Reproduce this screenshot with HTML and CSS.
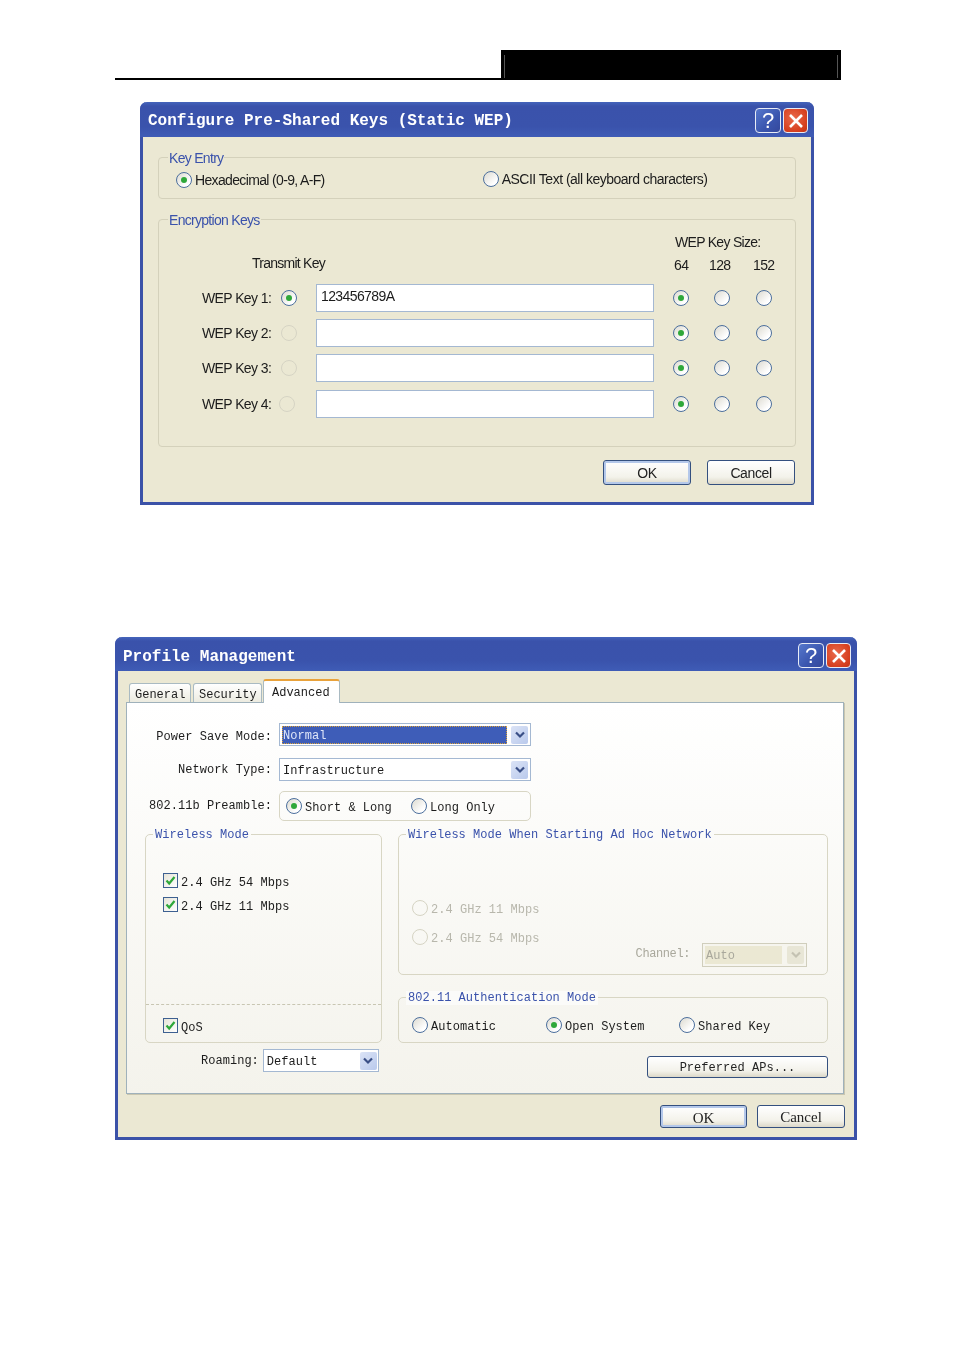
FILE: index.html
```html
<!DOCTYPE html>
<html lang="en">
<head>
<meta charset="utf-8">
<title>Wireless dialogs</title>
<link rel="stylesheet" href="styles.css">
</head>
<body>
<header class="page-head">
  <div class="head-rule"></div>
  <div class="head-box"><i class="head-tick"></i><i class="head-tick"></i></div>
</header>

<section class="dialog dialog-wep">
  <div class="titlebar">
    <span class="title">Configure Pre-Shared Keys (Static WEP)</span>
    <div class="title-btns">
      <span class="tb tb-help">?</span>
      <span class="tb tb-close"><svg viewBox="0 0 16 16" width="16" height="16"><path d="M2 2 14 14M14 2 2 14" stroke="#fff" stroke-width="2.6" fill="none"/></svg></span>
    </div>
  </div>
  <div class="wep-body">
    <div class="group key-entry">
      <span class="legend">Key Entry</span>
      <label class="opt hex"><span class="radio on"></span>Hexadecimal (0-9, A-F)</label>
      <label class="opt ascii"><span class="radio"></span>ASCII Text (all keyboard characters)</label>
    </div>
    <div class="group enc-keys">
      <span class="legend">Encryption Keys</span>
      <div class="size-title">WEP Key Size:</div>
      <div class="size-head">
        <span class="tx-title">Transmit Key</span>
        <span class="size-nums"><span>64</span><span>128</span><span>152</span></span>
      </div>
      <div class="key-row">
        <span class="key-label">WEP Key 1:</span>
        <span class="radio on tx"></span>
        <div class="key-input">123456789A</div>
        <div class="sizes"><span class="radio on"></span><span class="radio"></span><span class="radio"></span></div>
      </div>
      <div class="key-row">
        <span class="key-label">WEP Key 2:</span>
        <span class="radio off tx"></span>
        <div class="key-input"></div>
        <div class="sizes"><span class="radio on"></span><span class="radio"></span><span class="radio"></span></div>
      </div>
      <div class="key-row">
        <span class="key-label">WEP Key 3:</span>
        <span class="radio off tx"></span>
        <div class="key-input"></div>
        <div class="sizes"><span class="radio on"></span><span class="radio"></span><span class="radio"></span></div>
      </div>
      <div class="key-row last">
        <span class="key-label">WEP Key 4:</span>
        <span class="radio off tx"></span>
        <div class="key-input"></div>
        <div class="sizes"><span class="radio on"></span><span class="radio"></span><span class="radio"></span></div>
      </div>
    </div>
    <div class="actions wep-actions">
      <button class="btn default">OK</button>
      <button class="btn">Cancel</button>
    </div>
  </div>
</section>

<section class="dialog dialog-profile">
  <div class="titlebar">
    <span class="title">Profile Management</span>
    <div class="title-btns">
      <span class="tb tb-help">?</span>
      <span class="tb tb-close"><svg viewBox="0 0 16 16" width="16" height="16"><path d="M2 2 14 14M14 2 2 14" stroke="#fff" stroke-width="2.6" fill="none"/></svg></span>
    </div>
  </div>
  <div class="profile-body">
    <div class="tabs">
      <span class="tab t-general">General</span>
      <span class="tab t-security">Security</span>
      <span class="tab active">Advanced</span>
    </div>
    <div class="panel">
      <div class="form-row row-power">
        <span class="form-label">Power Save Mode:</span>
        <div class="select wide selected"><span class="select-val"><span class="sel-text">Normal</span></span><span class="arrow"><svg viewBox="0 0 12 12" width="12" height="12"><path d="M2 3.5 6 7.5 10 3.5" stroke="#3a4f86" stroke-width="2.2" fill="none"/></svg></span></div>
      </div>
      <div class="form-row">
        <span class="form-label">Network Type:</span>
        <div class="select wide"><span class="select-val">Infrastructure</span><span class="arrow"><svg viewBox="0 0 12 12" width="12" height="12"><path d="M2 3.5 6 7.5 10 3.5" stroke="#3a4f86" stroke-width="2.2" fill="none"/></svg></span></div>
      </div>
      <div class="form-row preamble-row">
        <span class="form-label">802.11b Preamble:</span>
        <div class="preamble">
          <label class="opt2 w125"><span class="radio on"></span>Short &amp; Long</label>
          <label class="opt2"><span class="radio"></span>Long Only</label>
        </div>
      </div>
      <div class="columns">
        <div class="col">
          <div class="group2 wireless">
            <span class="legend2">Wireless Mode</span>
            <div class="checks">
              <label class="opt2"><span class="check"><svg viewBox="0 0 13 13" width="13" height="13"><path d="M2.5 6.5 5.2 9.5 10.5 3" stroke="#2fa83a" stroke-width="2.2" fill="none"/></svg></span>2.4 GHz 54 Mbps</label>
              <label class="opt2"><span class="check"><svg viewBox="0 0 13 13" width="13" height="13"><path d="M2.5 6.5 5.2 9.5 10.5 3" stroke="#2fa83a" stroke-width="2.2" fill="none"/></svg></span>2.4 GHz 11 Mbps</label>
            </div>
            <div class="qos">
              <label class="opt2"><span class="check"><svg viewBox="0 0 13 13" width="13" height="13"><path d="M2.5 6.5 5.2 9.5 10.5 3" stroke="#2fa83a" stroke-width="2.2" fill="none"/></svg></span>QoS</label>
            </div>
          </div>
          <div class="roaming">
            <span class="roam-label">Roaming:</span>
            <div class="select roam"><span class="select-val">Default</span><span class="arrow"><svg viewBox="0 0 12 12" width="12" height="12"><path d="M2 3.5 6 7.5 10 3.5" stroke="#3a4f86" stroke-width="2.2" fill="none"/></svg></span></div>
          </div>
        </div>
        <div class="col">
          <div class="group2 adhoc">
            <span class="legend2">Wireless Mode When Starting Ad Hoc Network</span>
            <div class="adhoc-opts">
              <label class="opt2 dim"><span class="radio off"></span>2.4 GHz 11 Mbps</label>
              <label class="opt2 dim"><span class="radio off"></span>2.4 GHz 54 Mbps</label>
            </div>
            <div class="channel">
              <span class="channel-label">Channel:</span>
              <div class="select disabled"><span class="select-val">Auto</span><span class="arrow"><svg viewBox="0 0 12 12" width="12" height="12"><path d="M2 3.5 6 7.5 10 3.5" stroke="#c4c2b2" stroke-width="2.2" fill="none"/></svg></span></div>
            </div>
          </div>
          <div class="group2 auth">
            <span class="legend2">802.11 Authentication Mode</span>
            <label class="opt2 w134"><span class="radio"></span>Automatic</label>
            <label class="opt2 w133"><span class="radio on"></span>Open System</label>
            <label class="opt2"><span class="radio"></span>Shared Key</label>
          </div>
          <div class="pref-row"><button class="btn pref">Preferred APs...</button></div>
        </div>
      </div>
    </div>
    <div class="actions profile-actions">
      <button class="btn default serif-ok">OK</button>
      <button class="btn serif-cancel">Cancel</button>
    </div>
  </div>
</section>
</body>
</html>
```

FILE: styles.css
```css
* { box-sizing: border-box; }
html, body { margin: 0; padding: 0; background: #fff; }
body { height: 1350px; overflow: hidden; font-family: "Liberation Sans", Arial, sans-serif; color: #1c1c1c; }

.page-head { display: flex; align-items: flex-end; height: 30px; margin: 50px 0 0 115px; width: 726px; }
.head-rule { width: 386px; height: 2px; background: #000; }
.head-box { flex: 1; height: 30px; background: #000; display: flex; justify-content: space-between; padding: 5px 3px 2px 3px; }
.head-tick { display: block; width: 1px; background: #555; }

.dialog { background: #ebe8d3; border: 3px solid #3b52a8; border-top: 0; border-radius: 7px 7px 0 0; filter: blur(.35px); }
.dialog-wep { width: 674px; margin: 22px 0 0 140px; }
.dialog-profile { width: 742px; margin: 132px 0 0 115px; }

.titlebar { height: 35px; margin: 0 -3px; padding: 6px 6px 0 8px; display: flex; justify-content: space-between; align-items: flex-start; border-radius: 7px 7px 0 0; background: linear-gradient(#4464bb 0, #3a52ab 12%, #3a53ac 70%, #3f5cb6 100%); }
.dialog-profile .titlebar { height: 34px; }
.title { align-self: center; margin-top: -3px; font: bold 16px/20px "Liberation Mono", monospace; color: #fff; white-space: pre; }
.dialog-profile .title { margin-top: -1px; }
.title-btns { display: flex; gap: 2px; }
.tb { width: 26px; height: 25px; border: 1px solid #e8ecf6; border-radius: 4px; display: flex; align-items: center; justify-content: center; color: #fff; }
.tb-close { width: 25px; }
.tb-help { background: linear-gradient(135deg, #5577cc, #3a55ae 60%, #34489c); font: 22px/1 "Liberation Sans", sans-serif; }
.tb-close { background: radial-gradient(circle at 40% 40%, #ea6a4c, #d63f1f 70%, #c23415); }

.radio { flex: none; display: inline-block; position: relative; width: 16px; height: 16px; border-radius: 50%; border: 1.5px solid #4c6f9d; background: linear-gradient(135deg, #dcdad0, #fff 75%); }
.radio.on::after { content: ""; position: absolute; left: 3.5px; top: 3.5px; width: 6px; height: 6px; border-radius: 50%; background: #2fa83a; }
.radio.off { border-color: #d6d4c4; background: transparent; }

.group { position: relative; border: 1px solid #d4d1bb; border-radius: 4px; }
.legend { position: absolute; top: -7px; left: 9px; padding: 0 1px; background: #ebe8d3; color: #3a52ab; font-size: 14px; line-height: 15px; letter-spacing: -.7px; }

.wep-body { padding: 20px 15px 17px; font-size: 14px; letter-spacing: -.6px; }
.key-entry { height: 42px; display: flex; align-items: flex-start; }
.opt { display: flex; align-items: center; gap: 3px; white-space: nowrap; height: 16px; }
.hex { margin: 14px 0 0 17px; letter-spacing: -.65px; }
.ascii { margin: 13px 0 0 158px; letter-spacing: -.5px; }
.enc-keys { margin-top: 20px; height: 228px; padding-top: 14px; }
.size-title { margin-left: 516px; height: 16px; line-height: 16px; letter-spacing: -.7px; }
.size-head { position: relative; display: flex; height: 16px; line-height: 16px; margin-top: 7px; margin-left: 93px; }
.tx-title { width: 422px; margin-top: -2px; letter-spacing: -.75px; }
.size-nums { display: flex; }
.size-nums span:nth-child(1) { width: 35px; }
.size-nums span:nth-child(2) { width: 44px; }
.key-row { display: flex; align-items: center; height: 28px; margin: 11px 0 0 43px; }
.key-row + .key-row { margin-top: 7px; }
.key-row.last { margin-top: 8px; }
.key-label { width: 70px; white-space: nowrap; }
.tx { margin-left: 9px; }
.key-row.last .tx { margin-left: 7px; margin-right: 2px; }
.key-input { width: 338px; height: 28px; margin-left: 19px; padding: 2px 4px; line-height: 18px; background: #fff; border: 1.5px solid #a4b8d2; }
.sizes { display: flex; gap: 25px; margin-left: 19px; }
.sizes .radio:last-child { margin-left: 1px; }

.actions { display: flex; }
.wep-actions { justify-content: flex-end; gap: 16px; margin-top: 13px; padding-right: 1px; }
.btn { width: 88px; height: 25px; padding: 0; border: 1px solid #34507f; border-radius: 3px; background: linear-gradient(#fff, #f3f2ea 70%, #dcd8c8); color: #222; font-family: inherit; font-size: 14px; letter-spacing: -.4px; }
.btn.default { box-shadow: inset 0 0 0 2px #b4c8ea; }

.profile-body { padding: 8px 10px 0 8px; }
.tabs { display: flex; align-items: flex-end; height: 23px; padding-left: 3px; gap: 2px; font: 12px/18px "Liberation Mono", monospace; }
.tab { position: relative; height: 19px; padding: 2px 0 0 5px; border: 1px solid #a9bac2; border-bottom: 0; border-radius: 3px 3px 0 0; background: linear-gradient(#fff, #ecebe0); white-space: nowrap; }
.t-general { width: 62px; }
.t-security { width: 69px; }
.tab.active { z-index: 1; height: 24px; margin: 0 0 -1px -1px; width: 77px; padding: 3px 0 0 8px; background: #fff; border-top: 2px solid #e9a23b; border-color: #e9a23b #a9bac2 #fff; }

.panel { border: 1px solid #9fb1bb; box-shadow: 1px 1px 0 #c9c6b0; width: 718px; padding: 20px 15px 15px 18px; background: linear-gradient(#fff, #f4f3ec); font: 12px/16px "Liberation Mono", monospace; letter-spacing: .03px; }
.form-row { display: flex; align-items: center; gap: 7px; height: 23px; margin-bottom: 12px; }
.form-label { width: 127px; text-align: right; white-space: nowrap; }
.row-power .form-label { margin-top: 4px; }
.select { display: flex; align-items: center; justify-content: space-between; height: 23px; padding: 1px 2px; background: #fff; border: 1.5px solid #a4b8d2; }
.select.wide { width: 252px; }
.select-val { flex: 1; padding: 2px 0 0 1px; white-space: nowrap; }
.selected .select-val { margin-right: 4px; height: 18px; padding: 0 0 0 1px; background: #3e5db8; color: #dfe6f8; outline: 1px dotted #d8a13a; outline-offset: -1px; line-height: 20px; }
.arrow { flex: none; width: 17px; height: 18px; display: flex; align-items: center; justify-content: center; border-radius: 2px; background: linear-gradient(135deg, #dbe3f6, #b9c9ec); }

.preamble-row { height: 30px; margin-top: -2px; margin-bottom: 0; }
.preamble { width: 252px; height: 30px; display: flex; align-items: center; padding-left: 6px; border: 1.5px solid #d8d6c4; border-radius: 5px; }
.opt2 { display: inline-flex; align-items: flex-start; gap: 3px; height: 16px; line-height: 21px; white-space: nowrap; }
.w125 { width: 125px; }

.columns { display: grid; grid-template-columns: 237px 430px; column-gap: 16px; margin-top: 13px; }
.group2 { position: relative; border: 1.5px solid #d8d6c4; border-radius: 5px; }
.legend2 { position: absolute; top: -7px; left: 7px; padding: 0 2px; line-height: 14px; color: #3a52ab; background: #fbfbf9; white-space: nowrap; }
.wireless { height: 209px; display: flex; flex-direction: column; }
.checks { display: flex; flex-direction: column; gap: 8px; padding: 38px 0 0 17px; flex: 1; }
.check { flex: none; width: 15px; height: 15px; border: 1.5px solid #3d6091; background: linear-gradient(135deg, #e6e4d8, #fff); display: flex; align-items: center; justify-content: center; }
.qos { height: 38px; border-top: 1px dashed #c8c6b2; padding: 13px 0 0 17px; }
.roaming { display: flex; align-items: center; gap: 4px; margin-top: 6px; padding-left: 56px; }
.roam-label { white-space: nowrap; }
.select.roam { width: 116px; padding-right: 1px; }

.adhoc { height: 141px; }
.adhoc-opts { display: flex; flex-direction: column; gap: 13px; padding: 65px 0 0 13px; }
.dim { color: #b8b7ac; }
.channel { display: flex; align-items: center; justify-content: flex-end; gap: 12px; margin-top: -2px; padding-right: 20px; color: #a9a89c; }
.channel-label { margin-top: -2px; letter-spacing: -.4px; }
.select.disabled { width: 105px; height: 24px; border-color: #d0cebc; background: #f6f5ee; color: #a9a89c; }
.disabled .select-val { background: #ebe8d3; height: 18px; margin-right: 5px; padding-top: 2px; }
.disabled .arrow { background: #e8e6d6; }

.auth { height: 46px; margin-top: 22px; padding: 19px 0 0 13px; display: flex; align-items: flex-start; }
.w134 { width: 134px; }
.w133 { width: 133px; }
.pref-row { display: flex; justify-content: flex-end; margin-top: 13px; }
.btn.pref { width: 181px; height: 22px; padding-top: 2px; font: 12px/16px "Liberation Mono", monospace; letter-spacing: .03px; }

.profile-actions { justify-content: flex-end; gap: 10px; margin-top: 11px; padding-bottom: 9px; width: 719px; }
.serif-ok, .serif-cancel { font-family: "Liberation Serif", serif; letter-spacing: 0; height: 23px; }
.serif-ok { width: 87px; font-size: 15px; padding-top: 3px; }
.serif-cancel { font-size: 15px; padding-top: 2px; }
```
